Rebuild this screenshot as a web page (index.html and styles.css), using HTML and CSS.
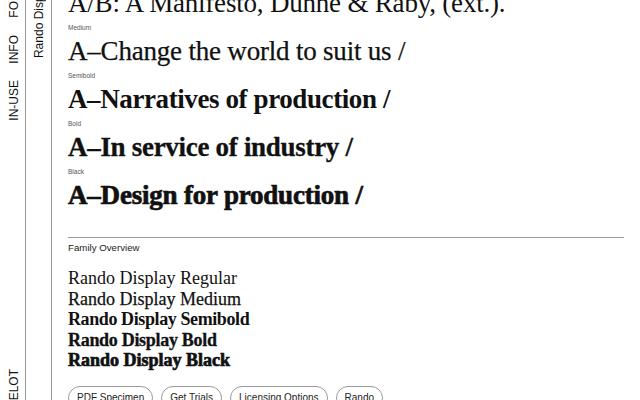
FILE: index.html
```html
<!DOCTYPE html>
<html lang="en">
<head>
  <meta charset="UTF-8" />
  <meta name="viewport" content="width=device-width, initial-scale=1.0"/>
  <title>Rando Display</title>
  <link rel="stylesheet" href="styles.css">
</head>
<body>

  <!-- SIDEBAR -->
  <nav class="rail rail-nav">
    <div class="rail-links">
      <a class="first" href="#">FONTS</a>
      <a href="#">INFO</a>
      <a href="#">IN-USE</a>
    </div>
    <a class="rail-bottom" href="#">CAMELOT</a>
  </nav>
  <div class="rail rail-title">
    <span>Rando Display</span>
  </div>

  <!-- MAIN CONTENT -->
  <main class="content">
    <section class="specimen">
      <h2 class="line w-regular">A/B: A Manifesto, Dunne &amp; Raby, (ext.).</h2>

      <p class="label">Medium</p>
      <h2 class="line w-medium">A–Change the world to suit us /</h2>

      <p class="label">Semibold</p>
      <h2 class="line w-semibold">A–Narratives of production /</h2>

      <p class="label">Bold</p>
      <h2 class="line w-bold">A–In service of industry /</h2>

      <p class="label">Black</p>
      <h2 class="line w-black">A–Design for production /</h2>
    </section>

    <section class="overview">
      <h3>Family Overview</h3>
      <ul class="family">
        <li class="w-regular">Rando Display Regular</li>
        <li class="w-medium">Rando Display Medium</li>
        <li class="w-semibold">Rando Display Semibold</li>
        <li class="w-bold">Rando Display Bold</li>
        <li class="w-black">Rando Display Black</li>
      </ul>

      <div class="pills">
        <a href="#">PDF Specimen</a>
        <a href="#">Get Trials</a>
        <a href="#">Licensing Options</a>
        <a href="#">Rando</a>
      </div>
    </section>
  </main>

</body>
</html>
```

FILE: styles.css
```css
body {
  margin: 0;
  height: 400px;
  overflow: hidden;
  display: flex;
  background: #fff;
  color: #111;
  font-family: 'Liberation Serif', serif;
}

a {
  color: inherit;
  text-decoration: none;
}

/* Sidebar columns */
.rail {
  flex-shrink: 0;
  height: 400px;
  box-sizing: border-box;
  width: 26px;
  border-right: 1px solid #9a9a9a;
  overflow: hidden;
  display: flex;
  flex-direction: column;
  align-items: center;
  font-family: 'Liberation Sans', Arial, sans-serif;
  font-size: 12px;
  line-height: 14px;
}

.rail-nav {
  padding-left: 3px;
}

.rail-title {
  padding-left: 1px;
}

.rail a,
.rail span {
  writing-mode: vertical-rl;
  transform: rotate(180deg);
  white-space: nowrap;
}

.rail-links {
  display: flex;
  flex-direction: column;
  align-items: center;
  gap: 17px;
}

.rail-links .first {
  margin-top: -23px;
}

.rail-bottom {
  margin-top: auto;
  margin-bottom: -27px;
}

.rail-title span {
  margin-top: -20px;
}

/* Main column */
.content {
  flex: 1;
  padding: 0 16px;
  margin-top: -13px;
}

.specimen {
  margin-bottom: 25px;
}

.line {
  margin: 0 0 4px;
  font-size: 27px;
  line-height: 33px;
  font-weight: 400;
  letter-spacing: -0.2px;
  white-space: nowrap;
}

.label {
  margin: 0 0 3px;
  font-family: 'Liberation Sans', Arial, sans-serif;
  font-size: 6.5px;
  line-height: 8px;
  color: #555;
}

.w-regular { font-weight: 400; }
.w-medium { font-weight: 400; -webkit-text-stroke: 0.25px currentColor; }
.w-semibold { font-weight: 700; letter-spacing: -0.4px; }
.w-bold { font-weight: 700; -webkit-text-stroke: 0.3px currentColor; letter-spacing: -0.3px; }
.w-black { font-weight: 700; -webkit-text-stroke: 0.7px currentColor; }

.overview {
  border-top: 1px solid #9a9a9a;
  padding-top: 3px;
}

.overview h3 {
  margin: 0;
  font-family: 'Liberation Sans', Arial, sans-serif;
  font-size: 9.7px;
  line-height: 14px;
  font-weight: 400;
  color: #222;
}

.family {
  list-style: none;
  margin: 13px 0 15px;
  padding: 0;
  font-size: 18px;
  line-height: 20.5px;
  letter-spacing: 0;
}

.pills {
  display: flex;
  gap: 8px;
}

.pills a {
  border: 1px solid #9a9a9a;
  border-radius: 12px;
  padding: 4px 8px;
  font-family: 'Liberation Sans', Arial, sans-serif;
  font-size: 10px;
  line-height: 14px;
  color: #222;
}
```
